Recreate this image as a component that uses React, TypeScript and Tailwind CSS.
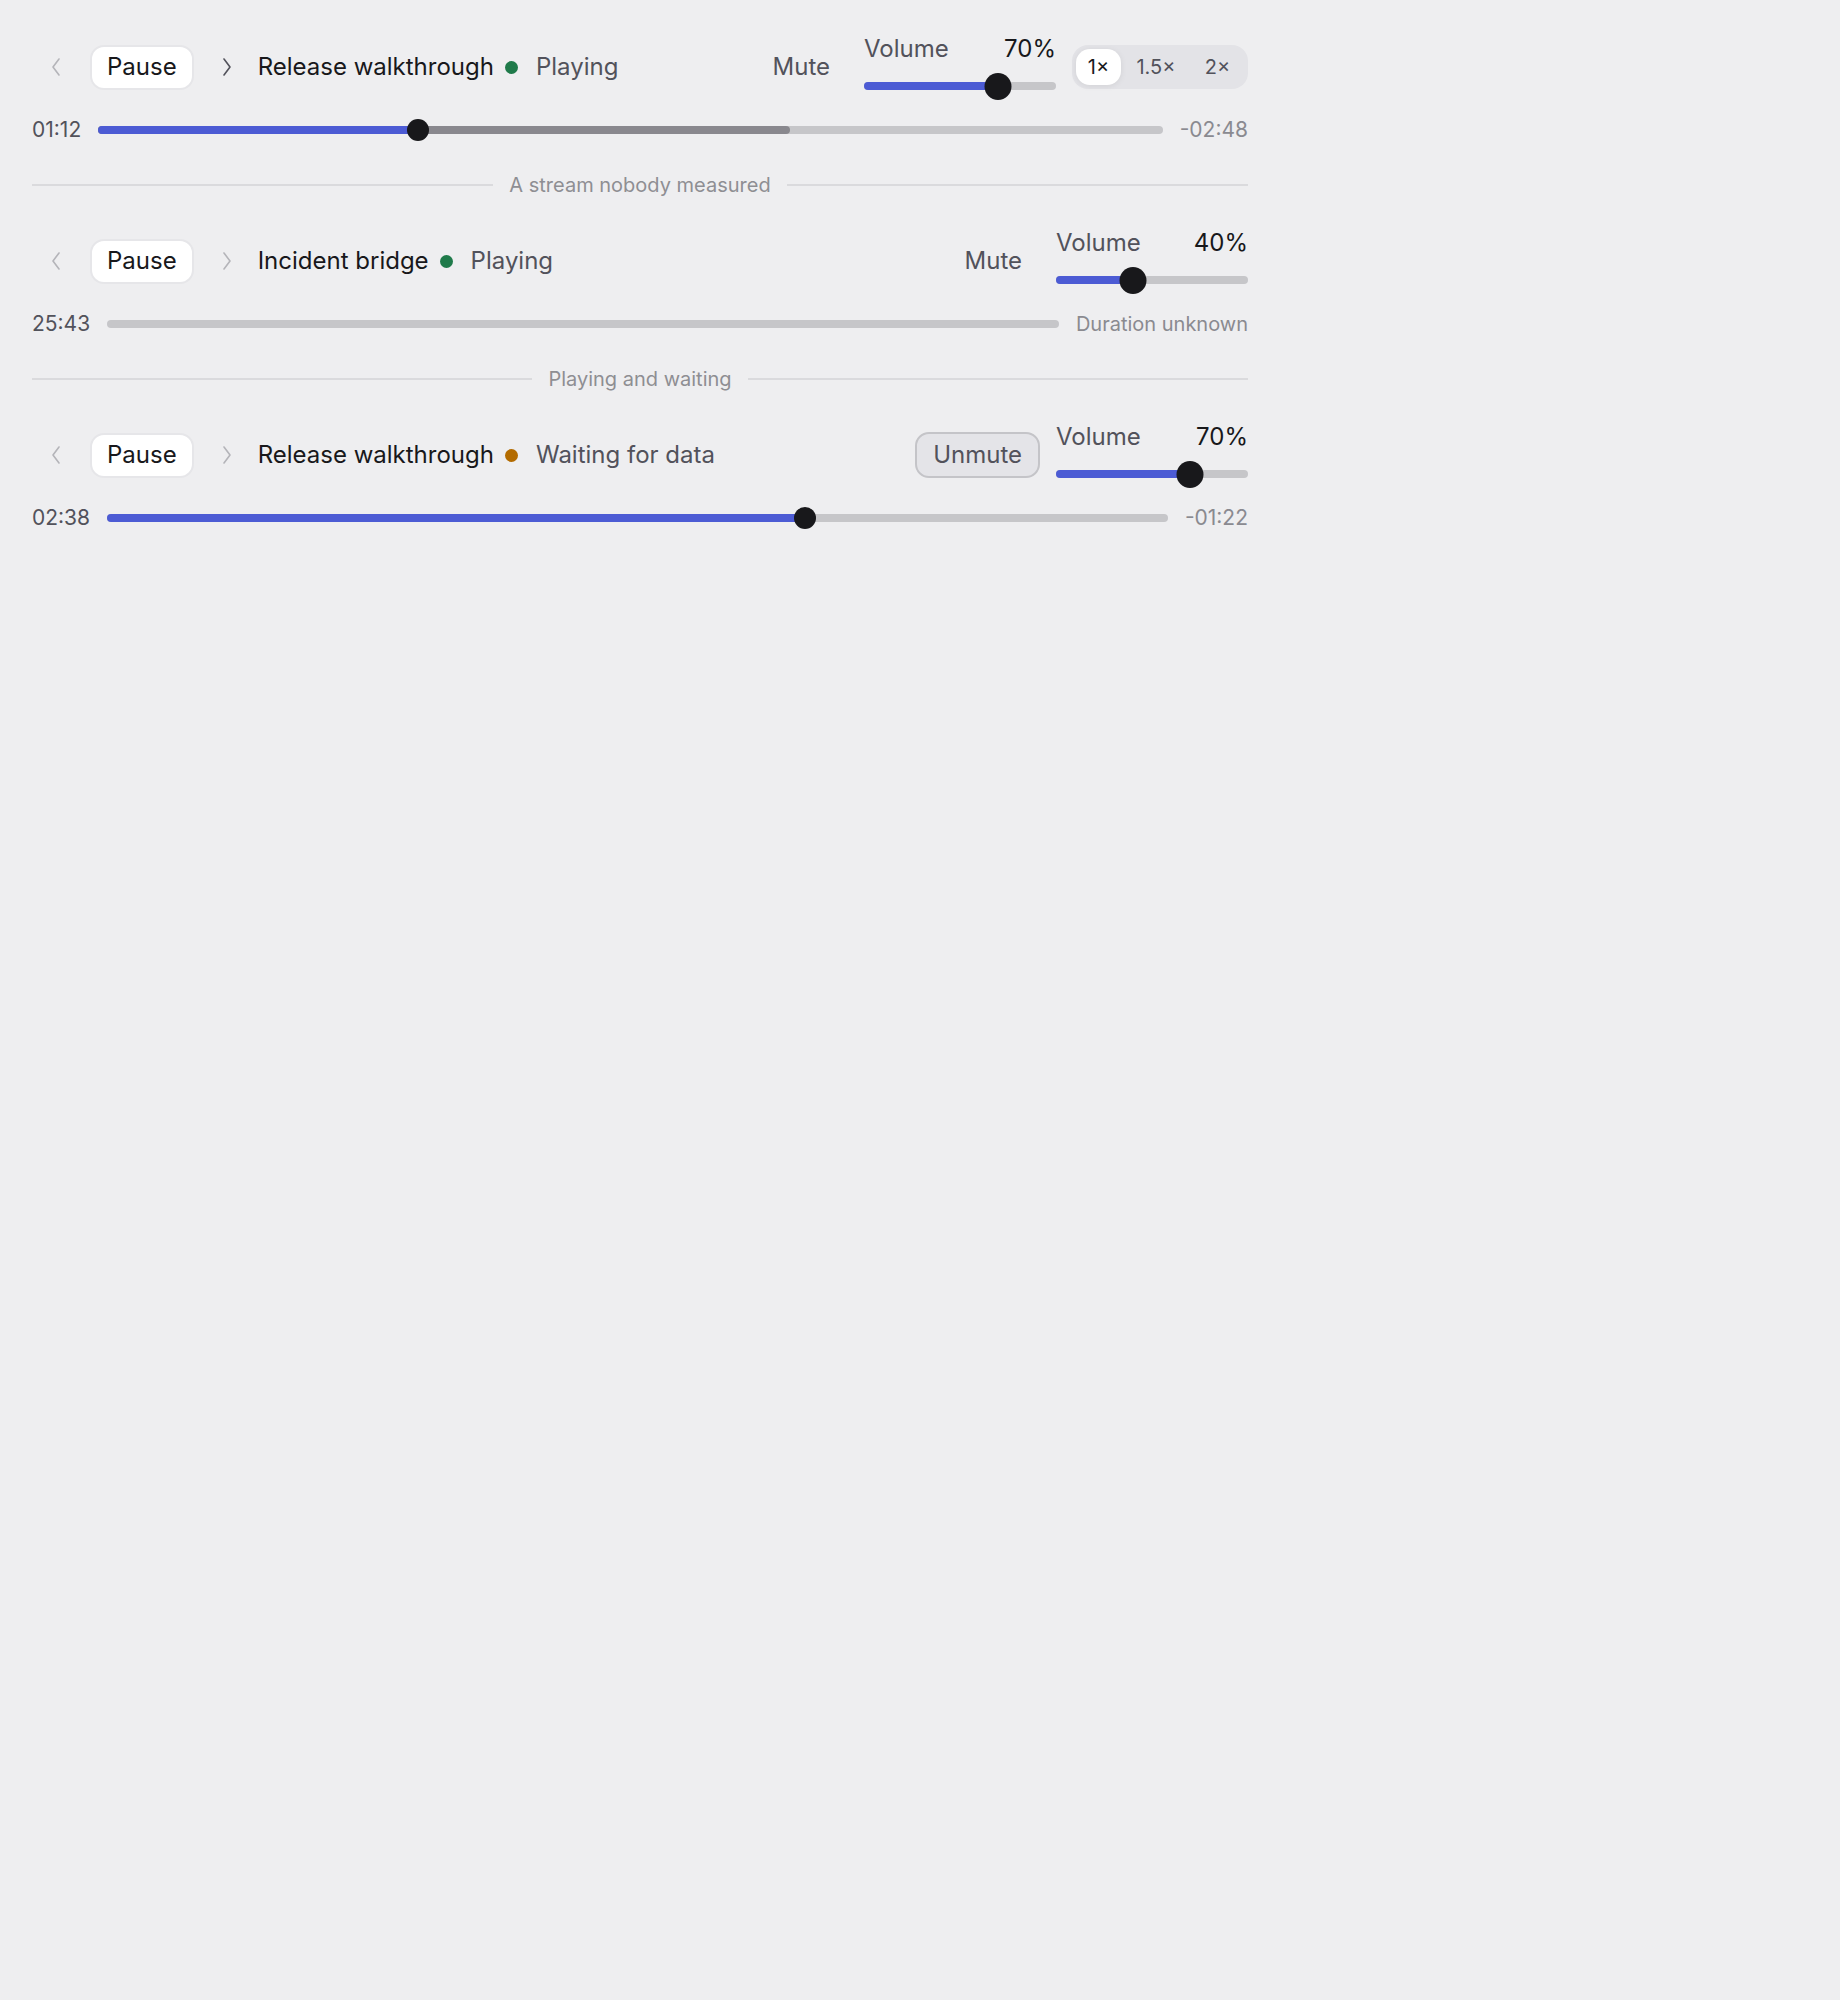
import React from "react";

type Track = {
  title: string;
  status: string;
  dot: string;
  prevEnabled: boolean;
  nextEnabled: boolean;
  muted: boolean;
  volume: number;
  speeds: boolean;
  current: string;
  right: string;
  progress: number | null;
  buffered: number | null;
};

const tracks: Track[] = [
  {
    title: "Release walkthrough",
    status: "Playing",
    dot: "bg-[#1f7a4a]",
    prevEnabled: false,
    nextEnabled: true,
    muted: false,
    volume: 70,
    speeds: true,
    current: "01:12",
    right: "-02:48",
    progress: 30,
    buffered: 65,
  },
  {
    title: "Incident bridge",
    status: "Playing",
    dot: "bg-[#1f7a4a]",
    prevEnabled: false,
    nextEnabled: false,
    muted: false,
    volume: 40,
    speeds: false,
    current: "25:43",
    right: "Duration unknown",
    progress: null,
    buffered: null,
  },
  {
    title: "Release walkthrough",
    status: "Waiting for data",
    dot: "bg-[#b36b00]",
    prevEnabled: false,
    nextEnabled: false,
    muted: true,
    volume: 70,
    speeds: false,
    current: "02:38",
    right: "-01:22",
    progress: 65.8,
    buffered: null,
  },
];

function Chevron({ dir, enabled }: { dir: "left" | "right"; enabled: boolean }) {
  return (
    <button
      className={`flex h-[45px] w-[48px] items-center justify-center ${
        enabled ? "text-[#52525b]" : "text-[#b4b4b9]"
      }`}
    >
      <svg width="12" height="22" viewBox="0 0 12 22" fill="none">
        {dir === "left" ? (
          <polyline points="9,3 3,11 9,19" stroke="currentColor" strokeWidth="1.6" strokeLinecap="round" strokeLinejoin="round" />
        ) : (
          <polyline points="3,3 9,11 3,19" stroke="currentColor" strokeWidth="1.6" strokeLinecap="round" strokeLinejoin="round" />
        )}
      </svg>
    </button>
  );
}

function Volume({ value }: { value: number }) {
  return (
    <div className="flex w-[192px] flex-col">
      <div className="flex h-[32px] items-center justify-between text-[24px] leading-[32px]">
        <span className="text-[#52525b]">Volume</span>
        <span className="text-[#18181b]">{value}%</span>
      </div>
      <div className="relative mt-[6px] h-[30px]">
        <div className="absolute left-0 right-0 top-[11px] h-[8px] rounded-full bg-[#c6c6c9]" />
        <div
          className="absolute left-0 top-[11px] h-[8px] rounded-full bg-[#4c5bd4]"
          style={{ width: `${value}%` }}
        />
        <div
          className="absolute top-[2px] h-[27px] w-[27px] -translate-x-1/2 rounded-full bg-[#18181b]"
          style={{ left: `${value}%` }}
        />
      </div>
    </div>
  );
}

function Speeds() {
  return (
    <div className="flex h-[44px] items-center rounded-[16px] bg-[#e3e3e7] p-[4px] text-[20px] text-[#52525b]">
      <span className="flex h-[36px] w-[45px] items-center justify-center rounded-[14px] bg-white text-[#18181b] shadow-[0_1px_6px_rgba(0,0,0,0.08)]">
        1×
      </span>
      <span className="flex h-[36px] w-[70px] items-center justify-center">1.5×</span>
      <span className="flex h-[36px] w-[53px] items-center justify-center">2×</span>
    </div>
  );
}

function Progress({ t }: { t: Track }) {
  return (
    <div className="flex h-[26px] items-center gap-[17px]">
      <span className="text-[21px] text-[#52525b]">{t.current}</span>
      <div className="relative h-[26px] flex-1">
        <div className="absolute left-0 right-0 top-[9px] h-[8px] rounded-full bg-[#c6c6c9]" />
        {t.buffered !== null && (
          <div
            className="absolute left-0 top-[9px] h-[8px] rounded-full bg-[#89888e]"
            style={{ width: `${t.buffered}%` }}
          />
        )}
        {t.progress !== null && (
          <>
            <div
              className="absolute left-0 top-[9px] h-[8px] rounded-full bg-[#4c5bd4]"
              style={{ width: `${t.progress}%` }}
            />
            <div
              className="absolute top-[2px] h-[22px] w-[22px] -translate-x-1/2 rounded-full bg-[#18181b]"
              style={{ left: `${t.progress}%` }}
            />
          </>
        )}
      </div>
      <span className={t.progress === null ? "text-[20px] text-[#8a8a90]" : "text-[21px] text-[#8a8a90]"}>
        {t.right}
      </span>
    </div>
  );
}

function Player({ t }: { t: Track }) {
  return (
    <div className="flex flex-col gap-4">
      <div className="flex h-[68px] items-center justify-between">
        <div className="flex items-center text-[24px]">
          <Chevron dir="left" enabled={t.prevEnabled} />
          <button className="ml-[10px] h-[45px] rounded-[14px] border-2 border-[#e6e6e9] bg-white px-[15px] text-[24px] text-[#18181b]">
            Pause
          </button>
          <div className="ml-[9px]">
            <Chevron dir="right" enabled={t.nextEnabled} />
          </div>
          <span className="ml-[7px] text-[#18181b]">{t.title}</span>
          <span className={`ml-[11px] h-[13px] w-[13px] rounded-full ${t.dot}`} />
          <span className="ml-[18px] text-[#52525b]">{t.status}</span>
        </div>
        <div className="flex items-center gap-4">
          {t.muted ? (
            <button className="h-[46px] rounded-[14px] border-2 border-[#c4c4c8] bg-[#e4e4e8] px-4 text-[24px] text-[#52525b]">
              Unmute
            </button>
          ) : (
            <button className="h-[46px] rounded-[14px] border-2 border-transparent px-4 text-[24px] text-[#52525b]">
              Mute
            </button>
          )}
          <Volume value={t.volume} />
          {t.speeds && <Speeds />}
        </div>
      </div>
      <Progress t={t} />
    </div>
  );
}

function Divider({ label }: { label: string }) {
  return (
    <div className="flex h-[28px] items-center gap-4">
      <div className="h-[2px] flex-1 bg-[#dadadd]" />
      <span className="text-[20px] text-[#8e8e93]">{label}</span>
      <div className="h-[2px] flex-1 bg-[#dadadd]" />
    </div>
  );
}

export default function App() {
  return (
    <div
      className="min-h-[2000px] bg-[#eeeef0]"
      style={{ fontFamily: "Inter, 'Noto Sans', sans-serif" }}
    >
      <div className="flex max-w-[1280px] flex-col gap-[28px] px-8 pb-8 pt-[33px]">
        <Player t={tracks[0]} />
        <Divider label="A stream nobody measured" />
        <Player t={tracks[1]} />
        <Divider label="Playing and waiting" />
        <Player t={tracks[2]} />
      </div>
    </div>
  );
}
